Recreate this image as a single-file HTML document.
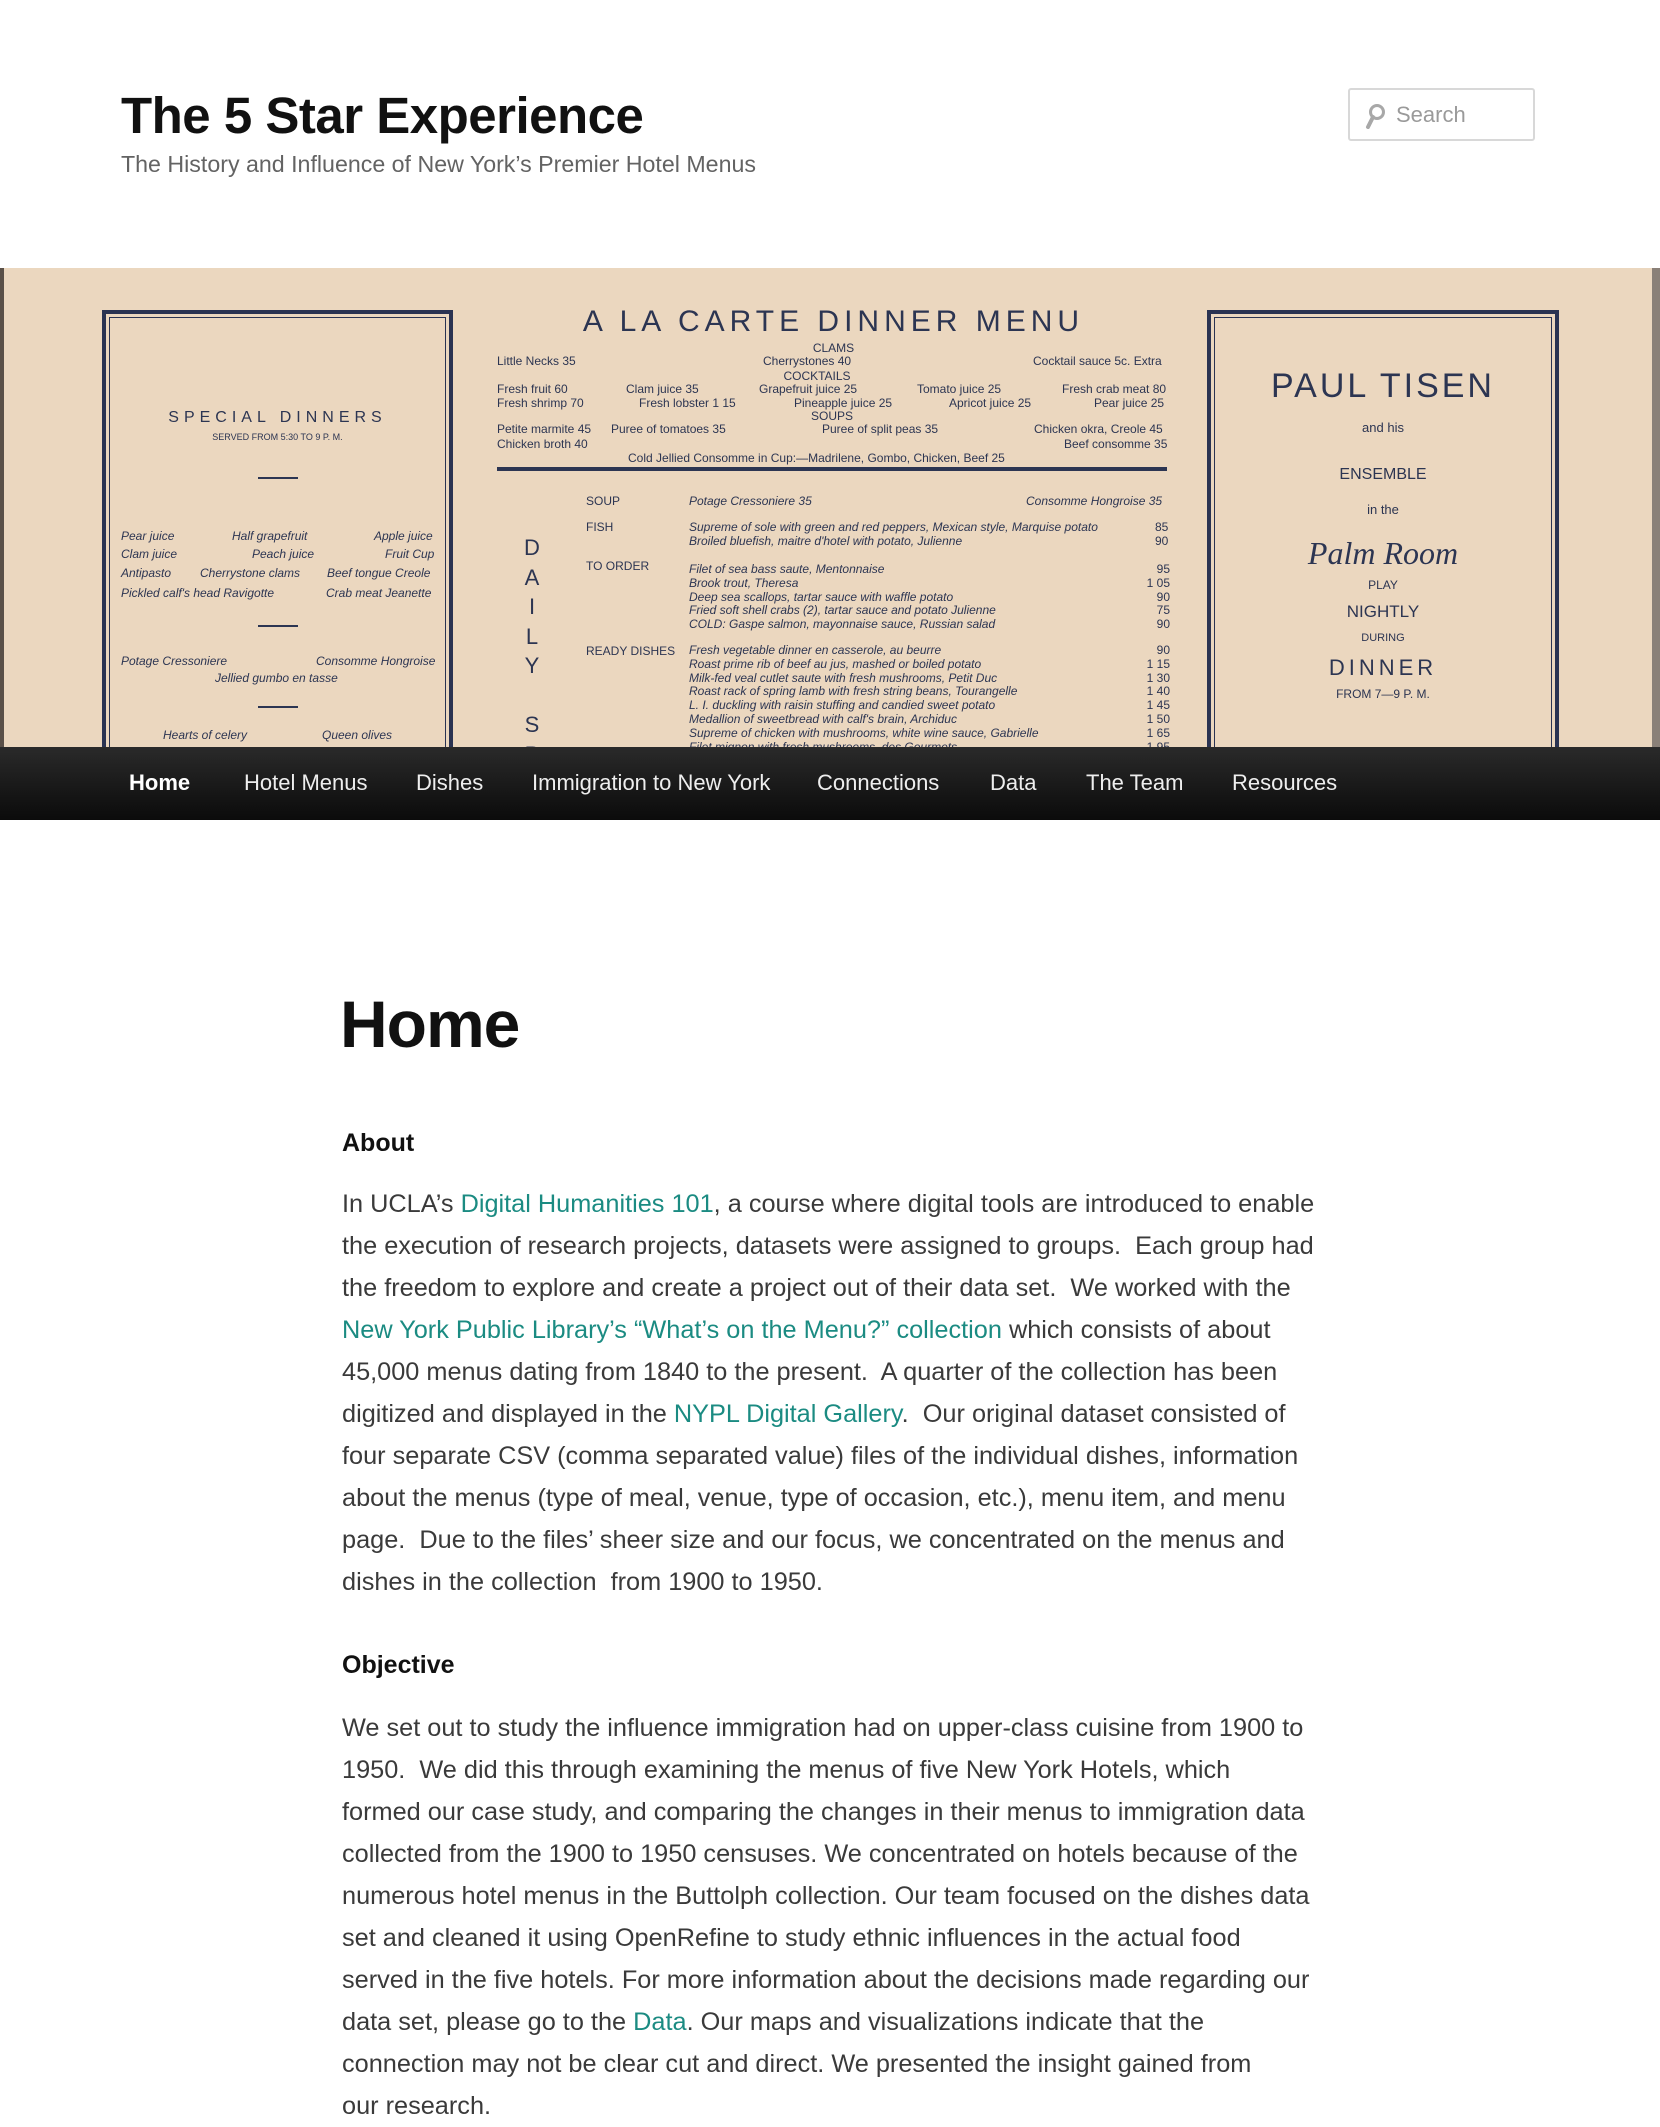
<!DOCTYPE html>
<html><head><meta charset="utf-8"><style>
*{margin:0;padding:0;box-sizing:border-box}
html,body{width:1660px;height:2084px;overflow:hidden;background:#fff;font-family:"Liberation Sans",Arial,sans-serif}
.a{position:absolute;white-space:nowrap}
#title{left:121px;top:90px;font-size:51px;font-weight:bold;color:#111;line-height:51px;letter-spacing:-0.5px}
#sub{left:121px;top:152px;font-size:23.2px;color:#636363;line-height:24px}
#search{left:1348px;top:88px;width:187px;height:53px;border:2px solid #d8d8d8;border-radius:3px;}
#search span{position:absolute;left:46px;top:12px;font-size:22px;color:#9a9a9a}
#banner{position:absolute;left:0;top:268px;width:1660px;height:479px;background:#ebd7bf;overflow:hidden}
#banner .m{position:absolute;white-space:nowrap;color:#2c3552;font-size:12px;line-height:14px}
.it{font-style:italic}
.box{position:absolute;border:4px solid #2a3352;border-bottom:none;outline:1px solid #2a3352;outline-offset:-8px}
#nav{position:absolute;left:0;top:747px;width:1660px;height:73px;background:linear-gradient(#2a2a2a,#0b0b0b)}
#nav span{position:absolute;top:24px;font-size:22px;color:#eee;line-height:24px}
.c{left:342px;color:#3a3a3a;font-size:25.3px;line-height:42px}
a{color:#1b8b82;text-decoration:none}
</style></head><body>
<div class="a" id="title">The 5 Star Experience</div>
<div class="a" id="sub">The History and Influence of New York’s Premier Hotel Menus</div>
<div class="a" id="search"><svg style="position:absolute;left:14px;top:13px" width="22" height="26" viewBox="0 0 22 26"><circle cx="13" cy="9" r="6.5" fill="none" stroke="#a8a8a8" stroke-width="3"/><path d="M9 14 L4 24" stroke="#a8a8a8" stroke-width="4" stroke-linecap="round"/></svg><span>Search</span></div>

<div id="banner">
<div style="position:absolute;left:0;top:0;width:4px;height:479px;background:#5a5048"></div>
<div style="position:absolute;right:0;top:0;width:8px;height:479px;background:#8a8078"></div>
<div class="box" style="left:102px;top:42px;width:351px;height:450px"></div>
<div class="box" style="left:1207px;top:42px;width:352px;height:450px"></div>
<div class="m" style="left:497px;top:38px;width:673px;text-align:center;font-size:30px;line-height:32px;letter-spacing:5px">A LA CARTE DINNER MENU</div>
<div class="m" style="left:102px;top:143px;width:351px;text-align:center;font-size:16px;letter-spacing:5px">SPECIAL DINNERS</div>
<div class="m" style="left:102px;top:162px;width:351px;text-align:center;font-size:9px">SERVED FROM 5:30 TO 9 P. M.</div>
<div style="position:absolute;left:258px;top:209px;width:40px;height:2px;background:#2c3552"></div>
<div class="m it" style="left:121px;top:261px">Pear juice</div><div class="m it" style="left:232px;top:261px">Half grapefruit</div><div class="m it" style="left:374px;top:261px">Apple juice</div>
<div class="m it" style="left:121px;top:279px">Clam juice</div><div class="m it" style="left:252px;top:279px">Peach juice</div><div class="m it" style="left:385px;top:279px">Fruit Cup</div>
<div class="m it" style="left:121px;top:298px">Antipasto</div><div class="m it" style="left:200px;top:298px">Cherrystone clams</div><div class="m it" style="left:327px;top:298px">Beef tongue Creole</div>
<div class="m it" style="left:121px;top:318px">Pickled calf's head Ravigotte</div><div class="m it" style="left:326px;top:318px">Crab meat Jeanette</div>
<div style="position:absolute;left:258px;top:357px;width:40px;height:2px;background:#2c3552"></div>
<div class="m it" style="left:121px;top:386px">Potage Cressoniere</div><div class="m it" style="left:316px;top:386px">Consomme Hongroise</div>
<div class="m it" style="left:215px;top:403px">Jellied gumbo en tasse</div>
<div style="position:absolute;left:258px;top:438px;width:40px;height:2px;background:#2c3552"></div>
<div class="m it" style="left:163px;top:460px">Hearts of celery</div><div class="m it" style="left:322px;top:460px">Queen olives</div>

<div class="m" style="left:497px;top:73px;width:673px;text-align:center">CLAMS</div>
<div class="m" style="left:497px;top:86px">Little Necks 35</div><div class="m" style="left:763px;top:86px">Cherrystones 40</div><div class="m" style="left:1033px;top:86px">Cocktail sauce 5c. Extra</div>
<div class="m" style="left:497px;top:101px;width:640px;text-align:center">COCKTAILS</div>
<div class="m" style="left:497px;top:114px">Fresh fruit 60</div><div class="m" style="left:626px;top:114px">Clam juice 35</div><div class="m" style="left:759px;top:114px">Grapefruit juice 25</div><div class="m" style="left:917px;top:114px">Tomato juice 25</div><div class="m" style="left:1062px;top:114px">Fresh crab meat 80</div>
<div class="m" style="left:497px;top:128px">Fresh shrimp 70</div><div class="m" style="left:639px;top:128px">Fresh lobster 1 15</div><div class="m" style="left:794px;top:128px">Pineapple juice 25</div><div class="m" style="left:949px;top:128px">Apricot juice 25</div><div class="m" style="left:1094px;top:128px">Pear juice 25</div>
<div class="m" style="left:497px;top:141px;width:670px;text-align:center">SOUPS</div>
<div class="m" style="left:497px;top:154px">Petite marmite 45</div><div class="m" style="left:611px;top:154px">Puree of tomatoes 35</div><div class="m" style="left:822px;top:154px">Puree of split peas 35</div><div class="m" style="left:1034px;top:154px">Chicken okra, Creole 45</div>
<div class="m" style="left:497px;top:169px">Chicken broth 40</div><div class="m" style="left:1064px;top:169px">Beef consomme 35</div>
<div class="m" style="left:628px;top:183px">Cold Jellied Consomme in Cup:—Madrilene, Gombo, Chicken, Beef 25</div>
<div style="position:absolute;left:497px;top:199px;width:670px;height:4px;border-top:3px solid #2c3552;border-bottom:1px solid #2c3552"></div>
<div class="m" style="left:586px;top:226px">SOUP</div><div class="m it" style="left:689px;top:226px">Potage Cressoniere 35</div><div class="m it" style="left:1026px;top:226px">Consomme Hongroise 35</div>
<div class="m" style="left:586px;top:252px">FISH</div><div class="m it" style="left:689px;top:252px">Supreme of sole with green and red peppers, Mexican style, Marquise potato</div><div class="m" style="left:1155px;top:252px">85</div>
<div class="m it" style="left:689px;top:266px">Broiled bluefish, maitre d'hotel with potato, Julienne</div><div class="m" style="left:1155px;top:266px">90</div>
<div class="m" style="left:586px;top:291px">TO ORDER</div>
<div class="m it" style="left:689px;top:295px;line-height:13.8px">Filet of sea bass saute, Mentonnaise<br>Brook trout, Theresa<br>Deep sea scallops, tartar sauce with waffle potato<br>Fried soft shell crabs (2), tartar sauce and potato Julienne<br>COLD: Gaspe salmon, mayonnaise sauce, Russian salad</div>
<div class="m" style="left:1140px;top:295px;line-height:13.8px;text-align:right;width:30px">95<br>1 05<br>90<br>75<br>90</div>
<div class="m" style="left:586px;top:376px">READY DISHES</div>
<div class="m it" style="left:689px;top:376px;line-height:13.8px">Fresh vegetable dinner en casserole, au beurre<br>Roast prime rib of beef au jus, mashed or boiled potato<br>Milk-fed veal cutlet saute with fresh mushrooms, Petit Duc<br>Roast rack of spring lamb with fresh string beans, Tourangelle<br>L. I. duckling with raisin stuffing and candied sweet potato<br>Medallion of sweetbread with calf's brain, Archiduc<br>Supreme of chicken with mushrooms, white wine sauce, Gabrielle<br>Filet mignon with fresh mushrooms, des Gourmets</div>
<div class="m" style="left:1140px;top:376px;line-height:13.8px;text-align:right;width:30px">90<br>1 15<br>1 30<br>1 40<br>1 45<br>1 50<br>1 65<br>1 95</div>
<div class="m" style="left:522px;top:265px;font-size:22px;line-height:29.5px;text-align:center;width:20px">D<br>A<br>I<br>L<br>Y<br><br>S<br>P</div>
<div class="m" style="left:1207px;top:100px;width:352px;text-align:center;font-size:34px;line-height:36px;letter-spacing:3px">PAUL TISEN</div>
<div class="m" style="left:1207px;top:153px;width:352px;text-align:center;font-size:13px">and his</div>
<div class="m" style="left:1207px;top:198px;width:352px;text-align:center;font-size:16px;line-height:18px">ENSEMBLE</div>
<div class="m" style="left:1207px;top:235px;width:352px;text-align:center;font-size:13px">in the</div>
<div class="m" style="left:1207px;top:267px;width:352px;text-align:center;font-size:32px;line-height:36px;font-style:italic;font-family:'Liberation Serif',serif">Palm Room</div>
<div class="m" style="left:1207px;top:310px;width:352px;text-align:center;font-size:12px">PLAY</div>
<div class="m" style="left:1207px;top:334px;width:352px;text-align:center;font-size:17px;line-height:19px">NIGHTLY</div>
<div class="m" style="left:1207px;top:363px;width:352px;text-align:center;font-size:11px">DURING</div>
<div class="m" style="left:1207px;top:388px;width:352px;text-align:center;font-size:22px;line-height:24px;letter-spacing:4px">DINNER</div>
<div class="m" style="left:1207px;top:419px;width:352px;text-align:center;font-size:12px">FROM 7—9 P. M.</div>
</div>

<div id="nav">
<span style="left:129px;font-weight:bold;color:#fff">Home</span>
<span style="left:244px">Hotel Menus</span>
<span style="left:416px">Dishes</span>
<span style="left:532px">Immigration to New York</span>
<span style="left:817px">Connections</span>
<span style="left:990px">Data</span>
<span style="left:1086px">The Team</span>
<span style="left:1232px">Resources</span>
</div>

<div class="a" style="left:340px;top:991px;font-size:66px;line-height:66px;font-weight:bold;color:#111;letter-spacing:-1px">Home</div>
<div class="a" style="left:342px;top:1130px;font-size:25px;line-height:26px;font-weight:bold;color:#111">About</div>
<div class="a c" style="top:1183px">In UCLA’s <a>Digital Humanities 101</a>, a course where digital tools are introduced to enable<br>the execution of research projects, datasets were assigned to groups.&nbsp; Each group had<br>the freedom to explore and create a project out of their data set.&nbsp; We worked with the<br><a>New York Public Library’s “What’s on the Menu?” collection</a> which consists of about<br>45,000 menus dating from 1840 to the present.&nbsp; A quarter of the collection has been<br>digitized and displayed in the <a>NYPL Digital Gallery</a>.&nbsp; Our original dataset consisted of<br>four separate CSV (comma separated value) files of the individual dishes, information<br>about the menus (type of meal, venue, type of occasion, etc.), menu item, and menu<br>page.&nbsp; Due to the files’ sheer size and our focus, we concentrated on the menus and<br>dishes in the collection&nbsp; from 1900 to 1950.</div>
<div class="a" style="left:342px;top:1652px;font-size:25px;line-height:26px;font-weight:bold;color:#111">Objective</div>
<div class="a c" style="top:1707px">We set out to study the influence immigration had on upper-class cuisine from 1900 to<br>1950.&nbsp; We did this through examining the menus of five New York Hotels, which<br>formed our case study, and comparing the changes in their menus to immigration data<br>collected from the 1900 to 1950 censuses. We concentrated on hotels because of the<br>numerous hotel menus in the Buttolph collection. Our team focused on the dishes data<br>set and cleaned it using OpenRefine to study ethnic influences in the actual food<br>served in the five hotels. For more information about the decisions made regarding our<br>data set, please go to the <a>Data</a>. Our maps and visualizations indicate that the<br>connection may not be clear cut and direct. We presented the insight gained from<br>our research.</div>
</body></html>
